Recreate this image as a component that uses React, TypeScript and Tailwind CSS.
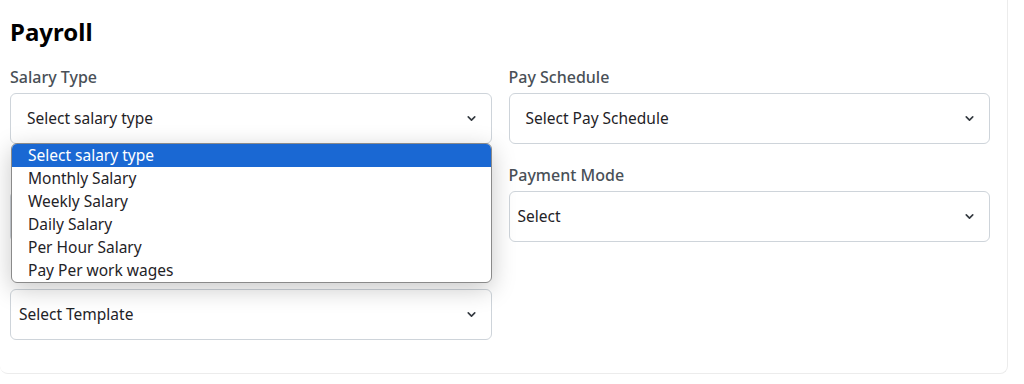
import { ChevronDown } from "lucide-react"

const salaryTypes = [
  "Select salary type",
  "Monthly Salary",
  "Weekly Salary",
  "Daily Salary",
  "Per Hour Salary",
  "Pay Per work wages",
]

function SelectBox({ value, pad = "pl-4" }: { value?: string; pad?: string }) {
  return (
    <div
      className={`flex h-[51px] items-center justify-between rounded-md border border-[#ced4da] bg-white ${pad} pr-[13px] text-[15.5px] text-[#1f2327]`}
    >
      <span>{value}</span>
      <ChevronDown size={13} strokeWidth={3} className="text-[#343a40]" />
    </div>
  )
}

function Field({ label, children }: { label?: string; children: React.ReactNode }) {
  return (
    <div className="relative">
      {label ? (
        <label className="mb-[4px] block text-[16px] leading-[24px] font-medium text-[#495057]">{label}</label>
      ) : (
        <div className="mb-[4px] h-[24px]" />
      )}
      {children}
    </div>
  )
}

export default function App() {
  return (
    <div className="h-[384px] bg-white" style={{ fontFamily: "'Noto Sans', 'Open Sans', sans-serif" }}>
      <div className="w-[1008px] rounded-b-lg border-r border-b border-[#ececec] pt-[16px] pb-[33px] pl-[10px] pr-[17px]">
        <h1 className="text-[24px] leading-[32px] font-bold text-black">Payroll</h1>

        <div className="mt-[17px] grid grid-cols-2 gap-x-[17px] gap-y-[19px]">
          <Field label="Salary Type">
            <SelectBox value="Select salary type" />

            {/* open native list */}
            <div className="absolute top-[78px] left-[1px] right-0 z-10 overflow-hidden rounded-md border border-[#8a8a8a] bg-white shadow-[0_6px_24px_rgba(0,0,0,0.22)]">
              {salaryTypes.map((t, i) => (
                <div
                  key={t}
                  className={`h-[23px] pl-[16px] text-[15.5px] leading-[23px] ${
                    i === 0 ? "bg-[#1a68d3] text-white" : "text-[#1f2327]"
                  }`}
                >
                  {t}
                </div>
              ))}
            </div>
          </Field>

          <Field label="Pay Schedule">
            <SelectBox value="Select Pay Schedule" />
          </Field>

          <Field>
            <SelectBox pad="pl-2" />
          </Field>

          <Field label="Payment Mode">
            <SelectBox value="Select" pad="pl-2" />
          </Field>

          <Field>
            <SelectBox value="Select Template" pad="pl-2" />
          </Field>
        </div>
      </div>
    </div>
  )
}
